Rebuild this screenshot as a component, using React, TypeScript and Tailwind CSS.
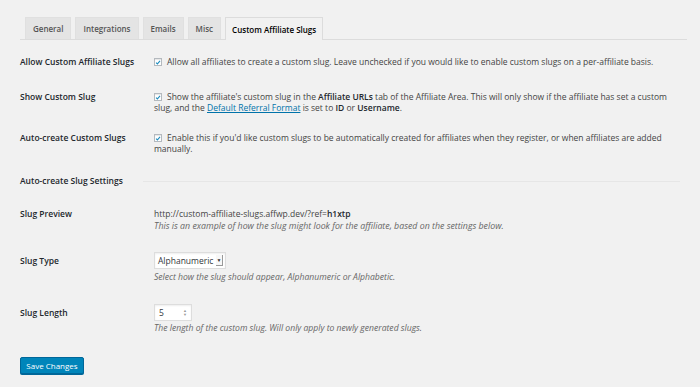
import React from "react";

const tabs = ["General", "Integrations", "Emails", "Misc", "Custom Affiliate Slugs"];

function Check() {
  return (
    <span className="mt-[2px] mr-[5px] flex h-[8px] w-[8px] shrink-0 items-center justify-center border border-[#b4b9be] bg-white shadow-[inset_0_1px_1px_rgba(0,0,0,0.1)]">
      <svg viewBox="0 0 10 10" className="h-[7px] w-[7px]">
        <path d="M1.8 5.2 L4 7.4 L8.4 2.4" fill="none" stroke="#1e8cbe" strokeWidth="1.8" />
      </svg>
    </span>
  );
}

function Label({ children }: { children: React.ReactNode }) {
  return <div className="w-[134px] shrink-0 font-semibold text-[#23282d]">{children}</div>;
}

export default function App() {
  return (
    <div
      className="h-[387px] w-[700px] overflow-hidden bg-[#f1f1f1] px-[20px] text-[8.5px] leading-[11px] text-[#444]"
      style={{ fontFamily: "'Open Sans', 'Noto Sans', sans-serif" }}
    >
      {/* ── Tabs ── */}
      <div className="mr-[-7px] mt-[18px] flex h-[22px] items-end gap-[4px] border-b border-[#dcdcdc] pl-[5px] text-[8px]">
        {tabs.map((t) => {
          const active = t === "Custom Affiliate Slugs";
          return (
            <div
              key={t}
              className={
                active
                  ? "mb-[-1px] flex h-[23px] items-center border border-b-0 border-[#dcdcdc] bg-[#f1f1f1] px-[6px] font-semibold text-black"
                  : "flex h-[22px] items-center border border-b-0 border-[#e0e0e0] bg-[#e4e4e4] px-[7px] font-semibold text-[#555]"
              }
            >
              {t}
            </div>
          );
        })}
      </div>

      {/* ── Settings rows ── */}
      <div className="mt-[16px] flex">
        <Label>Allow Custom Affiliate Slugs</Label>
        <div className="flex">
          <Check />
          <span>Allow all affiliates to create a custom slug. Leave unchecked if you would like to enable custom slugs on a per-affiliate basis.</span>
        </div>
      </div>

      <div className="mt-[24px] flex">
        <Label>Show Custom Slug</Label>
        <div className="w-[516px]">
          <span className="float-left">
            <Check />
          </span>
          Show the affiliate's custom slug in the <b className="font-semibold text-[#23282d]">Affiliate URLs</b> tab of the Affiliate Area. This will only show if the affiliate has set a custom slug, and the{" "}
          <a className="text-[#0073aa] underline">Default Referral Format</a> is set to <b className="font-semibold text-[#23282d]">ID</b> or{" "}
          <b className="font-semibold text-[#23282d]">Username</b>.
        </div>
      </div>

      <div className="mt-[19px] flex">
        <Label>Auto-create Custom Slugs</Label>
        <div className="w-[516px]">
          <span className="float-left">
            <Check />
          </span>
          Enable this if you'd like custom slugs to be automatically created for affiliates when they register, or when affiliates are added manually.
        </div>
      </div>

      <div className="mt-[21px] flex items-center">
        <Label>Auto-create Slug Settings</Label>
        <div className="ml-[-11px] mt-[1px] h-[1px] flex-1 bg-[#e6e6e6]" />
      </div>

      <div className="mt-[22px] flex">
        <Label>Slug Preview</Label>
        <div>
          <div>
            http://custom-affiliate-slugs.affwp.dev/?ref=<b className="font-semibold text-[#23282d]">h1xtp</b>
          </div>
          <div className="mt-[2px] text-[8.8px] italic text-[#666]">
            This is an example of how the slug might look for the affiliate, based on the settings below.
          </div>
        </div>
      </div>

      <div className="mt-[20px] flex">
        <div className="flex h-[17px] items-center">
          <Label>Slug Type</Label>
        </div>
        <div>
          <div className="flex h-[17px] w-[72px] items-center justify-between border border-[#ddd] bg-white pl-[3px] text-[#32373c] shadow-[inset_0_1px_2px_rgba(0,0,0,0.07)]">
            <span>Alphanumeric</span>
            <span className="mr-[2px] flex h-[11px] w-[7px] items-center justify-center border-r border-b border-[#999] bg-[#f7f7f7] text-[5px] leading-none text-[#333]">
              ▼
            </span>
          </div>
          <div className="mt-[3px] text-[8.6px] italic text-[#666]">Select how the slug should appear, Alphanumeric or Alphabetic.</div>
        </div>
      </div>

      <div className="mt-[21px] flex">
        <div className="flex h-[17px] items-center">
          <Label>Slug Length</Label>
        </div>
        <div>
          <div className="flex h-[17px] w-[38px] items-center justify-between border border-[#ddd] bg-white pl-[4px] pr-[4px] text-[#32373c] shadow-[inset_0_1px_2px_rgba(0,0,0,0.07)]">
            <span>5</span>
            <span className="flex flex-col text-[4px] leading-[4px] text-[#999]">
              <span>▲</span>
              <span>▼</span>
            </span>
          </div>
          <div className="mt-[2px] text-[8.6px] italic text-[#666]">The length of the custom slug. Will only apply to newly generated slugs.</div>
        </div>
      </div>

      <button className="mt-[23px] flex h-[17px] w-[64px] items-center justify-center rounded-[2px] border border-[#006799] bg-[#0085ba] text-[8px] text-white shadow-[0_1px_0_#006799]">
        Save Changes
      </button>
    </div>
  );
}
